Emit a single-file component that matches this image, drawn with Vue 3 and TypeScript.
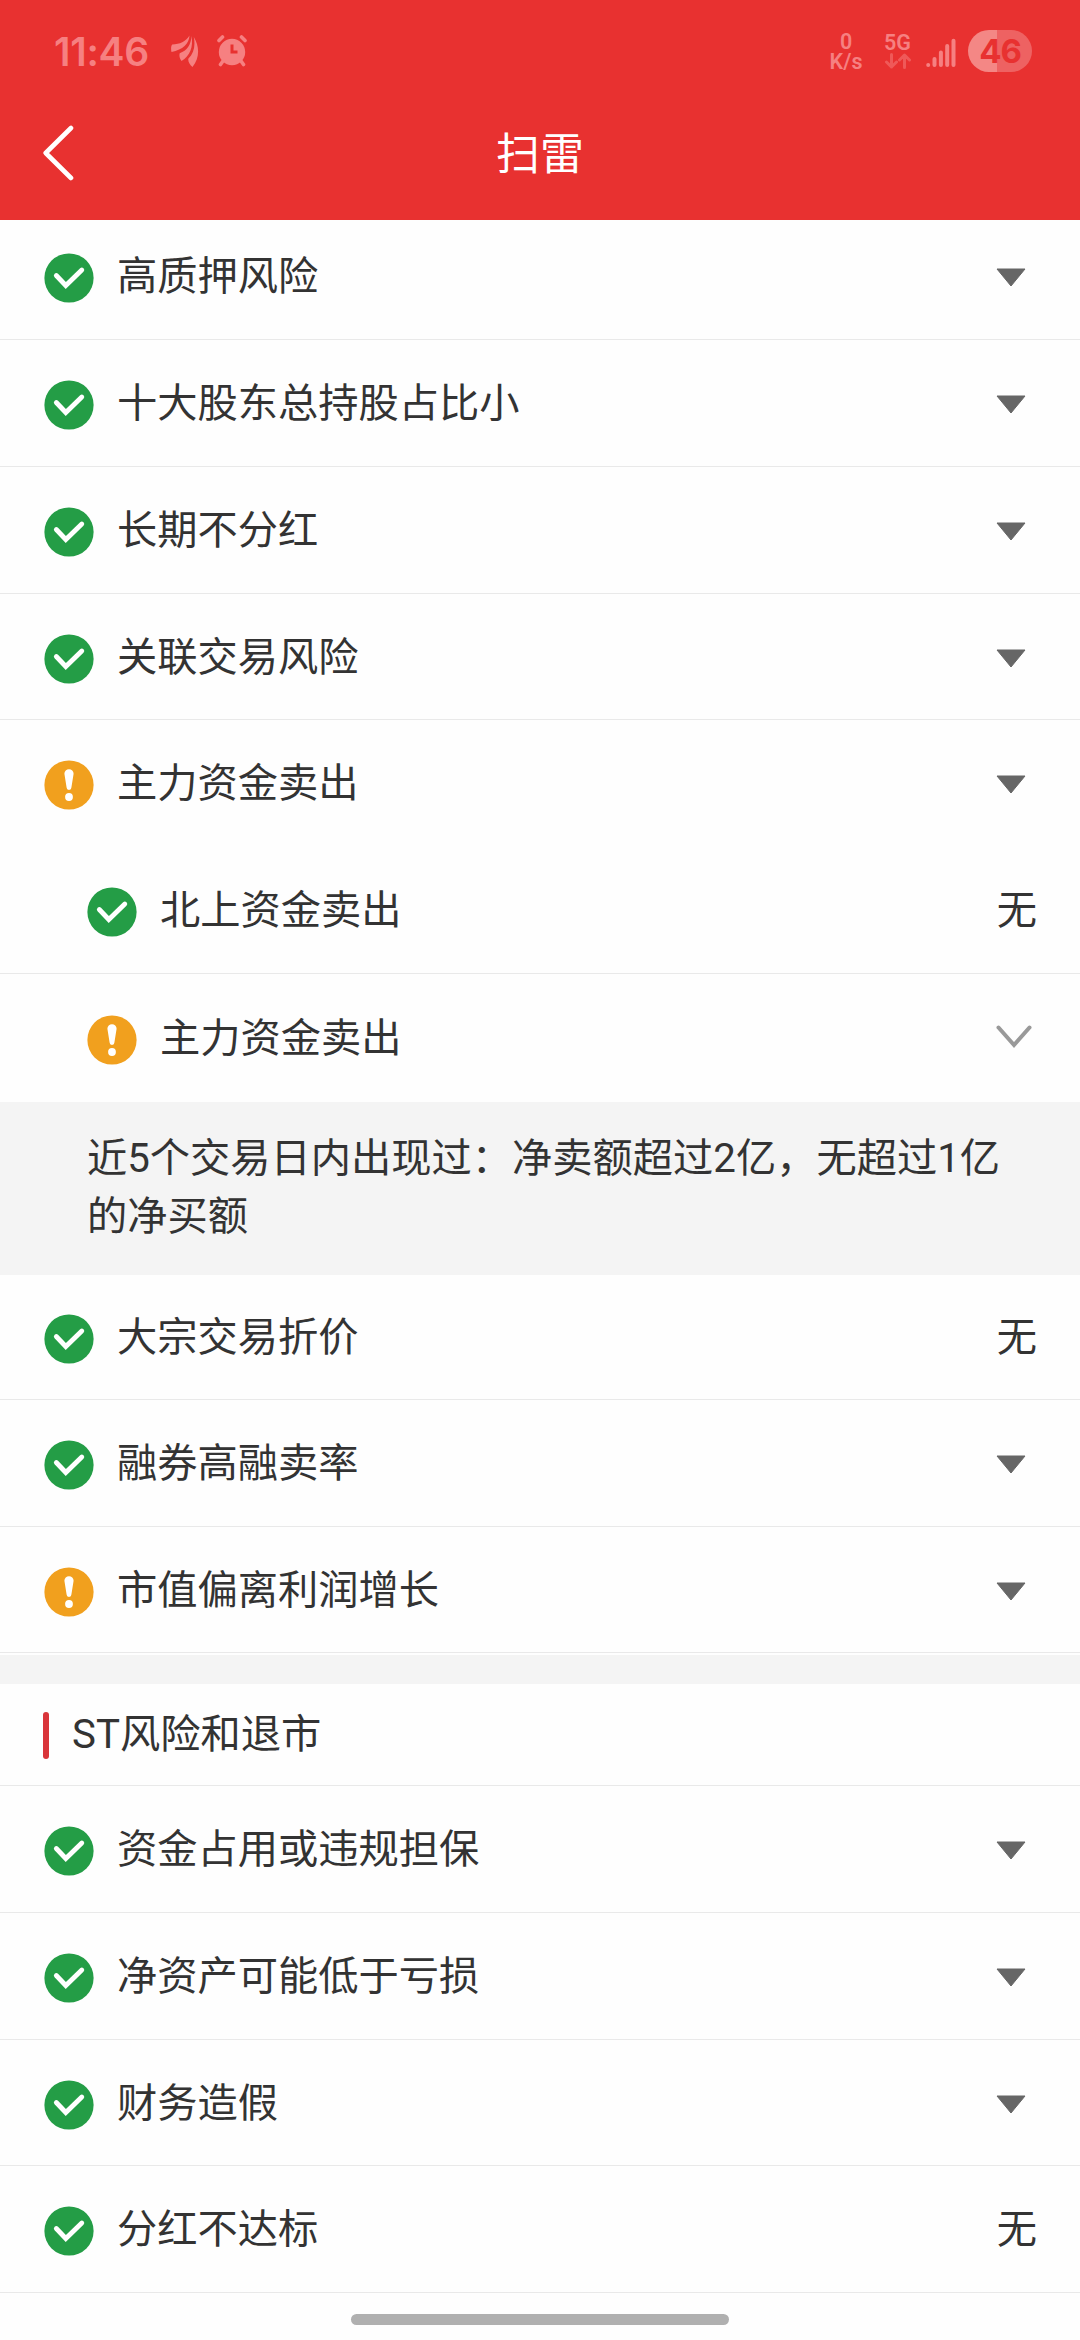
<script setup lang="ts">
type Status = 'ok' | 'warn'
type Tail = 'fold' | 'open' | 'none'

interface Item {
  title: string
  status: Status
  tail: Tail
  height: number
  nested?: boolean
  borderless?: boolean
}

const capitalTop: Item[] = [
  { title: '高质押风险', status: 'ok', tail: 'fold', height: 127 },
  { title: '十大股东总持股占比小', status: 'ok', tail: 'fold', height: 127 },
  { title: '长期不分红', status: 'ok', tail: 'fold', height: 127 },
  { title: '关联交易风险', status: 'ok', tail: 'fold', height: 126 },
  { title: '主力资金卖出', status: 'warn', tail: 'fold', height: 127, borderless: true },
  { title: '北上资金卖出', status: 'ok', tail: 'none', height: 127, nested: true },
  { title: '主力资金卖出', status: 'warn', tail: 'open', height: 128, nested: true, borderless: true },
]

const capitalBottom: Item[] = [
  { title: '大宗交易折价', status: 'ok', tail: 'none', height: 125 },
  { title: '融券高融卖率', status: 'ok', tail: 'fold', height: 127 },
  { title: '市值偏离利润增长', status: 'warn', tail: 'fold', height: 126 },
]

const delisting: Item[] = [
  { title: '资金占用或违规担保', status: 'ok', tail: 'fold', height: 127 },
  { title: '净资产可能低于亏损', status: 'ok', tail: 'fold', height: 127 },
  { title: '财务造假', status: 'ok', tail: 'fold', height: 126 },
  { title: '分红不达标', status: 'ok', tail: 'none', height: 127 },
]

interface Block {
  key: string
  heading?: string
  items: Item[]
  note?: string
}

const blocks: Block[] = [
  {
    key: 'capital-top',
    items: capitalTop,
    note: '近5个交易日内出现过：净卖额超过2亿，无超过1亿的净买额',
  },
  { key: 'capital-bottom', items: capitalBottom },
  { key: 'delisting', heading: 'ST风险和退市', items: delisting },
]
</script>

<template>
  <div class="screen">
    <header class="header">
      <div class="status-bar">
        <div class="status-left">
          <span class="clock">11:46</span>
          <svg class="leaf" width="28" height="32" viewBox="0 0 28 32">
            <path d="M18.500 0.500C18 9 12 14.500 0.500 17C-0.200 14 0 11 1.200 9.500C9 9 14.500 7 18.500 0.500Z" />
            <path d="M20.500 1C22.500 12 19 21 10.500 26C8.500 23.500 8 20.500 8.700 18.200C16 15.500 20 10 20.500 1Z" />
            <path d="M22.800 2C28.500 11 29 23 21.500 32C18.500 29.500 17 26.500 17.300 23.800C23 18 24.500 11 22.800 2Z" />
          </svg>
          <svg class="alarm" width="30" height="32" viewBox="0 0 30 32">
            <g stroke="currentColor" stroke-width="3.600" stroke-linecap="round">
              <path d="M2 5.500L5.500 2M28 5.500L24.500 2M6 26L3.500 29.500M24 26L26.500 29.500" />
            </g>
            <circle cx="15" cy="17" r="13.200" />
            <path class="hands" d="M15 9.500V17H20.500" />
          </svg>
        </div>
        <div class="status-right">
          <div class="speed"><span>0</span><span>K/s</span></div>
          <div class="network">
            <span>5G</span>
            <svg width="26" height="16" viewBox="0 0 26 16">
              <path d="M6.500 1.500V14M1.500 9L6.500 14L11.500 9M19.500 14.500V2M14.500 7L19.500 2L24.500 7" />
            </svg>
          </div>
          <svg class="signal" width="30" height="30" viewBox="0 0 30 30">
            <path d="M2.200 27V27.100M8.500 21V27M14.900 14.500V27M21.200 8V27M27.500 2.800V27" />
          </svg>
          <div class="battery">46</div>
        </div>
      </div>
      <div class="nav-bar">
        <svg class="back" width="32" height="56" viewBox="0 0 32 56">
          <path d="M29 3L3.700 28L29 53" />
        </svg>
        <h1 class="title">扫雷</h1>
      </div>
    </header>

    <main class="content">
      <section v-for="block in blocks" :key="block.key" class="block">
        <template v-if="block.heading">
          <div class="divider"></div>
          <div class="heading"><i class="mark"></i><span class="heading-text">{{ block.heading }}</span></div>
        </template>
        <div
          v-for="(item, i) in block.items"
          :key="i"
          class="row"
          :class="{ nested: item.nested, borderless: item.borderless }"
          :style="{ height: item.height + 'px' }"
        >
          <svg class="badge" width="50" height="50" viewBox="-25 -25 50 50">
            <template v-if="item.status === 'ok'">
              <circle r="24.600" fill="#249d46" />
              <path class="tick" d="M-12.700 -2.500L-3.200 7.500L12.800 -8" />
            </template>
            <template v-else>
              <circle r="24.600" fill="#f1a01e" />
              <path d="M-4.600 -11.200A4.600 4.600 0 0 1 4.600 -11.200L2.400 2.600A2.400 2.400 0 0 1 -2.400 2.600Z" fill="#fff" />
              <circle cy="12" r="3.900" fill="#fff" />
            </template>
          </svg>
          <span class="label">{{ item.title }}</span>
          <svg v-if="item.tail === 'fold'" class="fold" width="30" height="20" viewBox="0 0 30 20">
            <path d="M1 1H29L15 18Z" />
          </svg>
          <svg v-else-if="item.tail === 'open'" class="open" width="36" height="24" viewBox="0 0 36 24">
            <path d="M2.500 2.500L18 20L33.500 2.500" />
          </svg>
          <span v-else class="value">无</span>
        </div>
        <p v-if="block.note" class="note">{{ block.note }}</p>
      </section>
    </main>
    <div class="home-bar"></div>
  </div>
</template>

<style>
body {
  margin: 0;
  background: #fefefe;
}
</style>

<style scoped>
.screen {
  display: flex;
  flex-direction: column;
  width: 1080px;
  height: 2340px;
  overflow: hidden;
  background: #fefefe;
  color: #333;
  font-family: Roboto, "Noto Sans CJK SC", sans-serif;
  font-size: 40.25px;
}

.header {
  flex: none;
  height: 220px;
  background: #e83130;
}

.status-bar {
  display: flex;
  justify-content: space-between;
  height: 102px;
  padding: 0 48px 0 54px;
  box-sizing: border-box;
  color: #f68081;
}

.status-left,
.status-right {
  display: flex;
  align-items: center;
}

.clock {
  width: 97px;
  font: 600 39px/1 Inter, sans-serif;
  letter-spacing: -0.3px;
}

.leaf {
  margin-left: 20px;
  fill: currentColor;
}

.alarm {
  margin-left: 18px;
  fill: currentColor;
}

.hands {
  fill: none;
  stroke: #e83130;
  stroke-width: 3;
}

.speed,
.network {
  display: flex;
  flex-direction: column;
  align-items: center;
  font-weight: 600;
}

.speed {
  width: 34px;
  margin-top: 2px;
  font-size: 21.500px;
  line-height: 20px;
}

.network {
  margin-left: 21px;
  font-size: 21.500px;
  line-height: 20px;
}

.network svg {
  fill: none;
  stroke: #ef5958;
  stroke-width: 3;
  stroke-linecap: round;
  stroke-linejoin: round;
}

.signal {
  margin: 4px 0 0 15px;
  fill: none;
  stroke: currentColor;
  stroke-width: 4;
  stroke-linecap: round;
}

.battery {
  width: 64px;
  height: 42px;
  margin-left: 12px;
  border-radius: 21px;
  background: linear-gradient(90deg, #f48785 29px, #ee6262 29px);
  color: #e83130;
  font: 700 33px/42px Inter, sans-serif;
  letter-spacing: -1px;
  text-align: center;
}

.nav-bar {
  display: flex;
  align-items: center;
  height: 102px;
  padding: 0 42px;
}

.back {
  fill: none;
  stroke: #fff;
  stroke-width: 4.600;
  stroke-linecap: round;
  stroke-linejoin: round;
}

.title {
  flex: 1;
  margin: 3px 32px 0 0;
  color: #fff;
  font-size: 44px;
  font-weight: 400;
  line-height: 60px;
  text-align: center;
}

.content {
  flex: none;
  height: 2073px;
  overflow: hidden;
}

.block:first-child {
  margin-top: -7px;
}

.row {
  display: flex;
  align-items: center;
  box-sizing: border-box;
  padding: 0 43px 0 44px;
  border-bottom: 1px solid #e9e9e9;
}

.row.nested {
  padding-left: 87px;
}

.row.borderless {
  border-bottom-color: transparent;
}

.badge {
  margin-top: 4px;
}

.tick {
  fill: none;
  stroke: #fff;
  stroke-width: 4.800;
  stroke-linecap: round;
}

.label {
  flex: 1;
  margin: 2px 0 0 23px;
  line-height: 58px;
}

.value {
  margin-top: 2px;
  line-height: 58px;
}

.fold {
  margin: 4px 11px 0 0;
  fill: #666;
  stroke: #666;
  stroke-width: 1;
  stroke-linejoin: round;
}

.open {
  margin: -2px 5px 0 0;
  fill: none;
  stroke: #999;
  stroke-width: 4;
  stroke-linecap: round;
}

.note {
  height: 173px;
  margin: 0;
  padding: 28px 78px 0 87px;
  box-sizing: border-box;
  background: #f4f4f4;
  line-height: 58px;
}

.divider {
  height: 29px;
  margin-top: 2px;
  background: #f4f4f4;
}

.heading {
  display: flex;
  align-items: center;
  height: 102px;
  padding-left: 43px;
  box-sizing: border-box;
  border-bottom: 1px solid #e9e9e9;
}

.heading-text {
  line-height: 58px;
}

.mark {
  width: 6px;
  height: 47px;
  margin: 2px 23px 0 0;
  border-radius: 3px;
  background: #d9353a;
}

.home-bar {
  flex: none;
  width: 378px;
  height: 11px;
  margin: 21px auto 0;
  border-radius: 6px;
  background: #b0b0b0;
}
</style>
